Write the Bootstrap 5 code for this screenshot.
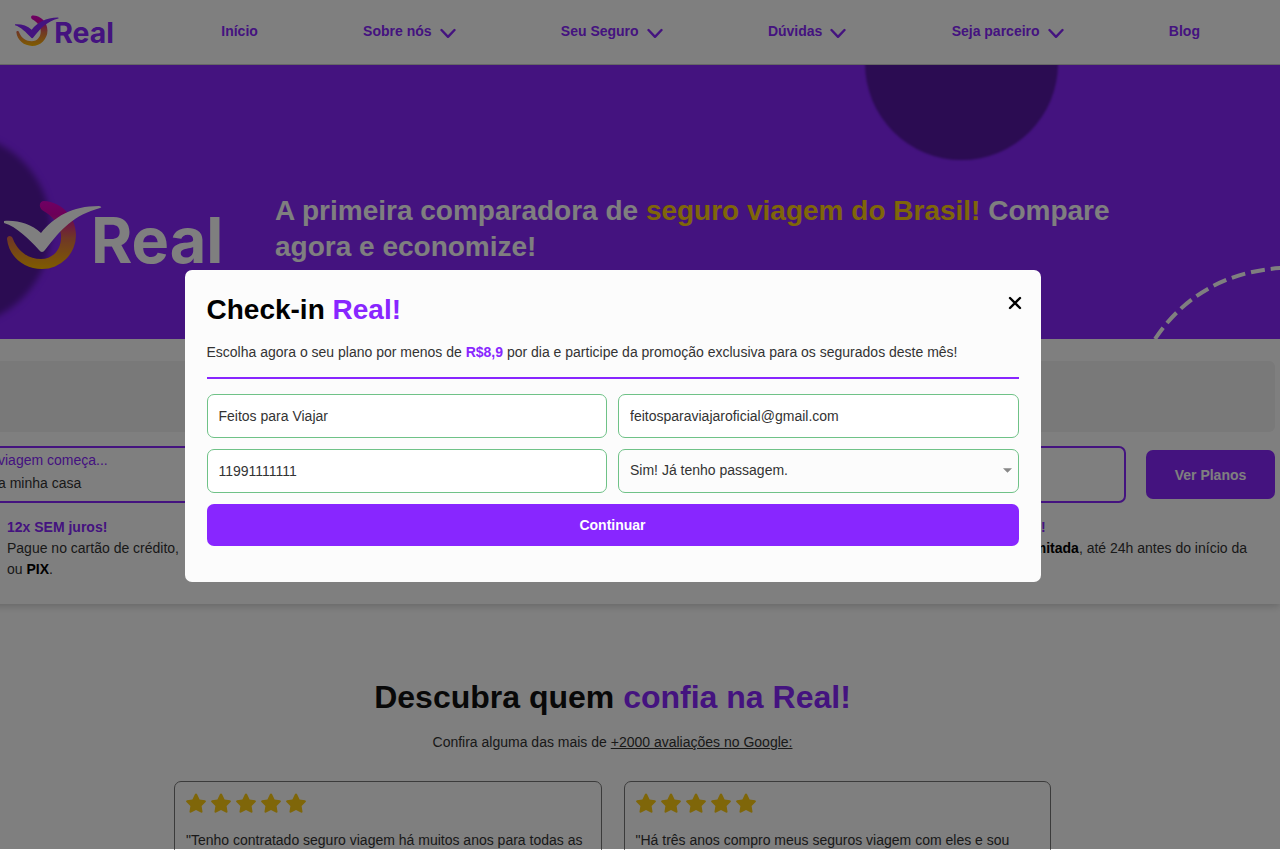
<!DOCTYPE html>
<html lang="pt-BR">
<head>
<meta charset="utf-8">
<meta name="viewport" content="width=device-width, initial-scale=1">
<title>Real Seguro Viagem</title>
<link href="https://cdn.jsdelivr.net/npm/bootstrap@5.3.0/dist/css/bootstrap.min.css" rel="stylesheet">
<style>
:root { --roxo: #8826ff; --amarelo: #ffcc12; --lado: 55px; }
body { font: 14px/22px "Liberation Sans", Arial, sans-serif; color: #333; background: #fff; height: 100vh; overflow: hidden; }
.roxo { color: var(--roxo); }
.topo { height: 65px; padding: 0 80px 2px 15px; border-bottom: 1px solid #ccc; }
.topo .nav-link { color: var(--roxo); font-weight: 700; padding: 0; gap: 8px; }
.marca { width: 101px; height: 32px; }
.marca-g { width: 224px; height: 70px; margin-left: 4px; overflow: visible; }
.hero { height: 274px; background: var(--roxo); padding-top: 128px; gap: 47px; }
.hero h1 { font-size: 28px; line-height: 36px; font-weight: 700; color: #fff; max-width: 870px; position: relative; }
.hero h1 span { color: var(--amarelo); }
.bola { position: absolute; width: 193px; height: 193px; border-radius: 50%; background: #5618a4; filter: blur(1px); }
.bola-cima { top: -98px; right: 222px; }
.bola-lado { top: 68px; left: -142px; filter: blur(3px); }
.rota { position: absolute; right: 0; bottom: 0; width: 130px; height: 76px; }
.pagina { margin-right: var(--lado); }
.busca { margin: 0 -55px 0 -50px; padding: 22px 5px 24px 0; box-shadow: 0 2px 8px rgba(0,0,0,.2); }
.faixa { height: 71px; background: #f2f2f2; border-radius: 6px; margin-bottom: 14px; }
.origem { height: 57px; border: 2px solid var(--roxo); border-radius: 7px; padding: 1px 46px; line-height: 23px; }
.ver { width: 129px; height: 49px; }
.cheio { background: var(--roxo); color: #fff; font: 700 14px/22px "Liberation Sans", Arial, sans-serif; border: 0; border-radius: 7px; }
.cheio:hover { background: #7414e8; color: #fff; }
.vantagens { padding: 14px 28px 0 57px; line-height: 21px; }
.vantagens b { color: #000; }
.recuo { padding-left: 19px; }
.depo h2 { font-size: 32px; line-height: 40px; font-weight: 700; color: #111; margin: 73px 0 14px; }
.cartoes { padding: 0 174px; gap: 22px; margin-top: 28px; }
.opiniao { border: 1px solid #777; border-radius: 7px; padding: 10px 11px; min-height: 160px; }
.estrelas { gap: 5px; height: 22px; margin-bottom: 15px; fill: var(--amarelo); }
.veu { background: rgba(0,0,0,.5); padding: 2px var(--lado) 0 0; bottom: 1px; height: auto; overflow: hidden; }
.veu .modal-dialog { max-width: 856px; }
.veu .modal-content { background: #fcfcfc; border: 0; border-radius: 7px; padding: 22px 22px 36px; color: #333; }
.veu h2 { font-size: 28px; line-height: 36px; font-weight: 700; color: #000; margin-bottom: 13px; }
.fechar { background: none; border: 0; padding: 4px; line-height: 0; margin-right: -7px; }
.risco { height: 2px; background: var(--roxo); margin: 14px 0 15px; }
.campos { display: grid; grid-template-columns: 1fr 1fr; gap: 11px; }
.campos .form-control, .campos .form-select { height: 44px; border: 1px solid #6fc287; border-radius: 7px; font-size: 14px; color: #333; padding: 0 11px; }
.campos .form-select { background: #fcfcfc url("data:image/svg+xml,%3Csvg xmlns='http://www.w3.org/2000/svg' viewBox='0 0 10 5'%3E%3Cpath d='M0 0h10L5 5z' fill='%23888'/%3E%3C/svg%3E") no-repeat right 6px center / 9px 5px; }
.campos .cheio { grid-column: 1 / -1; height: 42px; }
</style>
</head>
<body>
<svg class="position-absolute" width="0" height="0" aria-hidden="true">
  <defs>
    <linearGradient id="fogo" x1="0" y1="0" x2="0" y2="1"><stop offset="0" stop-color="#e000c8"/><stop offset=".2" stop-color="#d800b0"/><stop offset=".55" stop-color="#e0704a"/><stop offset="1" stop-color="#ffb800"/></linearGradient>
  </defs>
  <symbol id="anel" viewBox="0 0 224 70">
    <path fill="url(#fogo)" d="M40 0C58 1 72 16 72 34A34 34 0 0 1 38 68C20 68 5 56 3 38C3 34 8 34 9 38C14 51 25 58 37 58C50 58 58 47 57 34C56 24 49 15 38 9C34 5 36 0 40 0Z"/>
    <path fill="currentColor" d="M0 20C14 19 27 23 37 32C50 16 68 5 95 5Q99 6 96 7C70 14 57 28 41 49Q38 53 35 49C25 38 13 26 0 22Z"/>
  </symbol>
  <symbol id="seta" viewBox="0 0 16 11"><path d="M1.500 2L8 8.800L14.500 2" fill="none" stroke="currentColor" stroke-width="2.400" stroke-linecap="round" stroke-linejoin="round"/></symbol>
  <symbol id="estrela" viewBox="0 0 20 20"><path d="M10 .5C10.500 .5 10.900 .8 11.100 1.200L13.600 6.400L19 7.200C19.900 7.400 20.200 8.400 19.600 9L15.600 13L16.500 18.500C16.600 19.400 15.700 20 14.900 19.600L10 17L5.100 19.600C4.300 20 3.400 19.400 3.500 18.500L4.400 13L.4 9C-.2 8.400 .1 7.400 1 7.200L6.400 6.400L8.900 1.200C9.100 .8 9.500 .5 10 .5Z"/></symbol>
</svg>

<header class="topo bg-white">
  <nav class="nav h-100 flex-nowrap align-items-center justify-content-between">
    <a href="#" class="lh-1" aria-label="Real"><svg class="marca roxo" viewBox="0 0 224 70"><use href="#anel"/><text x="87" y="62" font-family="Inter" font-weight="700" font-size="63" fill="currentColor">Real</text></svg></a>
    <a class="nav-link" href="#">Início</a>
    <a class="nav-link d-flex align-items-center" href="#">Sobre nós <svg class="mt-1" width="16" height="11"><use href="#seta"/></svg></a>
    <a class="nav-link d-flex align-items-center" href="#">Seu Seguro <svg class="mt-1" width="16" height="11"><use href="#seta"/></svg></a>
    <a class="nav-link d-flex align-items-center" href="#">Dúvidas <svg class="mt-1" width="16" height="11"><use href="#seta"/></svg></a>
    <a class="nav-link d-flex align-items-center" href="#">Seja parceiro <svg class="mt-1" width="16" height="11"><use href="#seta"/></svg></a>
    <a class="nav-link" href="#">Blog</a>
  </nav>
</header>

<section class="hero d-flex align-items-start position-relative overflow-hidden">
  <div class="bola bola-cima"></div>
  <div class="bola bola-lado"></div>
  <svg class="rota" viewBox="0 0 130 76"><path d="M5 76C30 38 72 8 132 5" fill="none" stroke="#fff" stroke-width="4" stroke-dasharray="14 6"/></svg>
  <svg class="marca-g flex-shrink-0 position-relative text-white mt-2" viewBox="0 0 224 70"><use href="#anel"/><text x="87" y="62" font-family="Inter" font-weight="700" font-size="63" fill="currentColor">Real</text></svg>
  <h1 class="mb-0">A primeira comparadora de <span>seguro viagem do Brasil!</span> Compare<br>agora e economize!</h1>
</section>

<main class="pagina">
  <section class="busca">
    <div class="faixa"></div>
    <div class="d-flex align-items-center">
      <div class="origem flex-grow-1 me-3"><div class="roxo">viagem começa...</div><div>a minha casa</div></div>
      <button type="button" class="btn cheio ver ms-1">Ver Planos</button>
    </div>
    <div class="vantagens d-flex justify-content-between">
      <div><strong class="roxo">12x SEM juros!</strong><br>Pague no cartão de crédito,<br>ou <b>PIX</b>.</div>
      <div><strong class="roxo recuo">!</strong><br><b>ilimitada</b>, até 24h antes do início da</div>
    </div>
  </section>

  <section class="depo text-center">
    <h2>Descubra quem <span class="roxo">confia na Real!</span></h2>
    <p class="mb-0">Confira alguma das mais de <a href="#" class="text-reset">+2000 avaliações no Google:</a></p>
    <div class="cartoes d-flex text-start">
      <article class="opiniao flex-fill w-50">
        <div class="estrelas d-flex align-items-center"><svg width="20" height="20"><use href="#estrela"/></svg><svg width="20" height="20"><use href="#estrela"/></svg><svg width="20" height="20"><use href="#estrela"/></svg><svg width="20" height="20"><use href="#estrela"/></svg><svg width="20" height="20"><use href="#estrela"/></svg></div>
        <p class="mb-0 text-nowrap">"Tenho contratado seguro viagem há muitos anos para todas as</p>
      </article>
      <article class="opiniao flex-fill w-50">
        <div class="estrelas d-flex align-items-center"><svg width="20" height="20"><use href="#estrela"/></svg><svg width="20" height="20"><use href="#estrela"/></svg><svg width="20" height="20"><use href="#estrela"/></svg><svg width="20" height="20"><use href="#estrela"/></svg><svg width="20" height="20"><use href="#estrela"/></svg></div>
        <p class="mb-0 text-nowrap">"Há três anos compro meus seguros viagem com eles e sou</p>
      </article>
    </div>
  </section>
</main>

<div class="modal d-block veu" role="dialog" aria-labelledby="titulo">
  <div class="modal-dialog modal-dialog-centered">
    <div class="modal-content">
      <div class="d-flex justify-content-between align-items-start">
        <h2 id="titulo">Check-in <span class="roxo">Real!</span></h2>
        <button type="button" class="fechar" aria-label="Fechar"><svg width="14" height="14" viewBox="0 0 14 14"><path d="M2 2L12 12M12 2L2 12" stroke="#000" stroke-width="2.400" stroke-linecap="round"/></svg></button>
      </div>
      <p class="mb-0">Escolha agora o seu plano por menos de <strong class="roxo">R$8,9</strong> por dia e participe da promoção exclusiva para os segurados deste mês!</p>
      <div class="risco"></div>
      <form class="campos">
        <input class="form-control" type="text" aria-label="Nome" value="Feitos para Viajar">
        <input class="form-control" type="email" aria-label="E-mail" value="feitosparaviajaroficial@gmail.com">
        <input class="form-control" type="tel" aria-label="Telefone" value="11991111111">
        <select class="form-select" aria-label="Passagem"><option>Sim! Já tenho passagem.</option></select>
        <button type="button" class="btn cheio">Continuar</button>
      </form>
    </div>
  </div>
</div>
<script src="https://cdn.jsdelivr.net/npm/bootstrap@5.3.0/dist/js/bootstrap.bundle.min.js"></script>
</body>
</html>
